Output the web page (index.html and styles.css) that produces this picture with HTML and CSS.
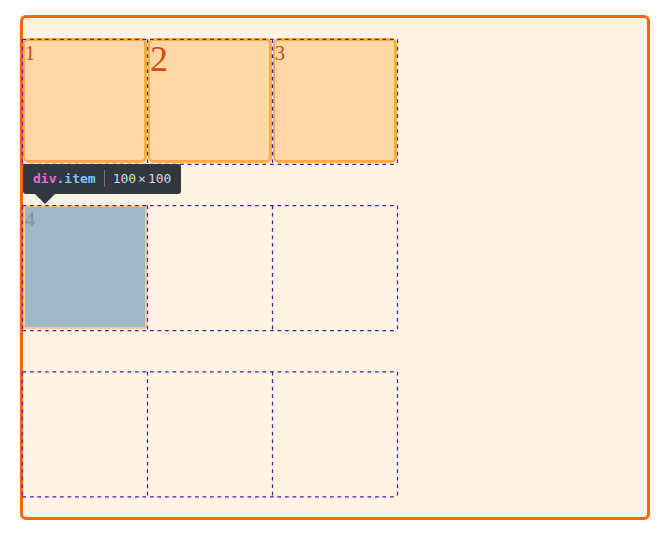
FILE: index.html
```html
<!DOCTYPE html>
<html lang="en">
<head>
<meta charset="utf-8">
<title>Grid align-content</title>
<link rel="stylesheet" href="styles.css">
</head>
<body>
<main class="container">
  <div class="item">1</div>
  <div class="item item-large">2</div>
  <div class="item">3</div>
  <div class="item item-selected">4
    <div class="tooltip">
      <span class="selector"><span class="tag">div</span><span class="class-name">.item</span></span>
      <span class="size">100<span class="times">×</span>100</span>
    </div>
  </div>
  <svg class="grid-lines" viewBox="0 0 302 368" aria-hidden="true">
    <path d="M1 1H301M1 101H301M1 134H301M1 234H301M1 267H301M1 367H301"/>
    <path d="M1 1V101M101 1V101M201 1V101M301 1V101M1 134V234M101 134V234M201 134V234M301 134V234M1 267V367M101 267V367M201 267V367M301 267V367"/>
  </svg>
</main>
</body>
</html>
```
FILE: styles.css
```css
* {
  box-sizing: border-box;
}

body {
  margin: 0;
  padding: 15px 10px 17px 20px;
  min-height: 100vh;
  display: grid;
  background: #fff;
  font-family: "Liberation Serif", "Times New Roman", serif;
  font-size: 20px;
  line-height: 24px;
}

.container {
  position: relative;
  display: grid;
  grid-template-columns: repeat(3, 125px);
  grid-template-rows: repeat(3, 125px);
  align-content: space-around;
  border: 3px solid #ff6600;
  border-radius: 6px;
  background: #fff3e4;
}

.item {
  position: relative;
  margin: -1px 1px 1px 0;
  border: 3px solid #ffa94d;
  border-left-width: 2px;
  border-radius: 6px;
  background: #fed7a6;
  color: #d9480f;
}

.item-large {
  font-size: 36px;
  line-height: 36px;
}

.item-selected {
  margin: 0 1px 1px 0;
  border-width: 2px;
  border-color: #ffcc80;
  border-radius: 2px;
  background: #a0b6cb;
  color: #8d8c9b;
}

.grid-lines {
  position: absolute;
  top: 20px;
  left: -2px;
  width: 378px;
  height: 460px;
  fill: none;
  stroke: #5a189a;
  stroke-width: 1;
  stroke-dasharray: 3 3;
}

.tooltip {
  position: absolute;
  z-index: 1;
  left: -2px;
  bottom: 100%;
  margin-bottom: 13px;
  display: flex;
  align-items: center;
  height: 30px;
  padding: 0 10px;
  border-radius: 3px;
  background: #333740;
  color: #d7d7db;
  font: 13px "DejaVu Sans Mono", monospace;
  white-space: nowrap;
}

.tooltip::after {
  content: "";
  position: absolute;
  top: 100%;
  left: 12px;
  border: 10px solid transparent;
  border-top-color: #333740;
  border-bottom-width: 0;
}

.selector {
  padding-right: 8px;
  font-weight: bold;
}

.tag {
  color: #e36eda;
}

.class-name {
  color: #7cc4ee;
}

.size {
  border-left: 1px solid #70737a;
  padding-left: 8px;
  line-height: 17px;
}

.times {
  margin: 0 2px;
}
```
